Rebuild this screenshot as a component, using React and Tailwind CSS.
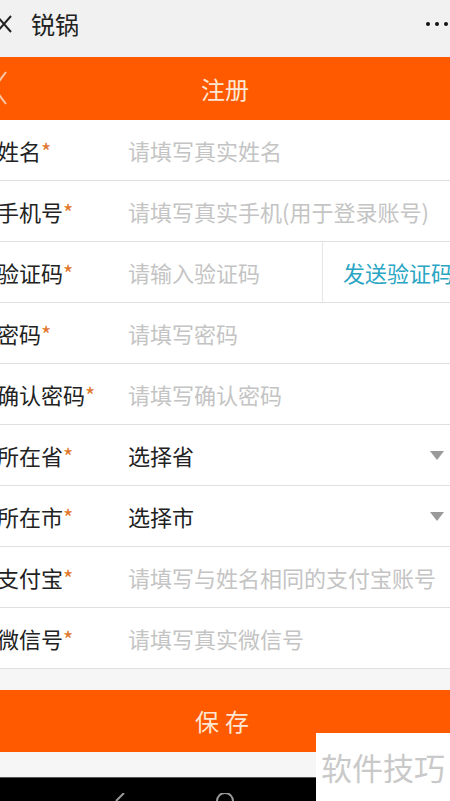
import React from 'react';

const fields = [
  { label: '姓名', placeholder: '请填写真实姓名' },
  { label: '手机号', placeholder: '请填写真实手机(用于登录账号)' },
  { label: '验证码', placeholder: '请输入验证码', code: true },
  { label: '密码', placeholder: '请填写密码' },
  { label: '确认密码', placeholder: '请填写确认密码' },
  { label: '所在省', value: '选择省', select: true },
  { label: '所在市', value: '选择市', select: true },
  { label: '支付宝', placeholder: '请填写与姓名相同的支付宝账号' },
  { label: '微信号', placeholder: '请填写真实微信号' },
];

function Row({ field }) {
  return (
    <div className="flex items-center h-[61px] border-b border-[#e0e0e0] bg-white">
      <div className="w-[131px] shrink-0 -ml-[3px] text-[22px] text-[#222] whitespace-nowrap">
        {field.label}
        <span className="text-[#e0762a]">*</span>
      </div>
      {field.select ? (
        <div className="flex-1 flex items-center justify-between pr-[6px] text-[22px] text-[#222]">
          <span>{field.value}</span>
          <svg width="14" height="9" viewBox="0 0 14 9">
            <path d="M0 0h14L7 9z" fill="#9a9a9a" />
          </svg>
        </div>
      ) : (
        <div className="flex-1 text-[22px] text-[#c4c4c4] whitespace-nowrap overflow-hidden">{field.placeholder}</div>
      )}
      {field.code && (
        <div className="h-full flex items-center border-l border-[#e6e6e6] pl-[20px] w-[128px] shrink-0 text-[22px] text-[#2aa6c4] whitespace-nowrap overflow-hidden">
          发送验证码
        </div>
      )}
    </div>
  );
}

export default function App() {
  return (
    <div
      className="relative w-[450px] h-[801px] overflow-hidden bg-[#f6f6f6]"
      style={{ fontFamily: '"Noto Sans CJK SC", "Noto Sans", sans-serif' }}
    >
      {/* WeChat top bar */}
      <div className="h-[57px] bg-[#f1f1f1] flex items-center justify-between pb-[10px]">
        <div className="flex items-center">
          <svg width="16" height="18" viewBox="0 0 16 18" className="-ml-[4px]">
            <path d="M1 1l14 16M15 1L1 17" stroke="#222" strokeWidth="2" />
          </svg>
          <span className="ml-[19px] text-[24px] text-[#222]">锐锅</span>
        </div>
        <div className="flex gap-[5px] pr-[2px]">
          <span className="w-[4px] h-[4px] rounded-full bg-[#111]"></span>
          <span className="w-[4px] h-[4px] rounded-full bg-[#111]"></span>
          <span className="w-[4px] h-[4px] rounded-full bg-[#111]"></span>
        </div>
      </div>

      {/* orange header */}
      <div className="relative h-[63px] bg-[#ff5a00] flex items-center justify-center">
        <svg width="16" height="36" viewBox="0 0 16 36" className="absolute left-[-8px] top-[13px]">
          <path d="M14 2L2 18l12 16" stroke="#f7c7a5" strokeWidth="2" fill="none" />
        </svg>
        <span className="text-[24px] text-[#fde7d4]">注册</span>
      </div>

      {/* form */}
      <div>
        {fields.map((f) => (
          <Row key={f.label} field={f} />
        ))}
      </div>

      <div className="h-[21px]"></div>

      <div className="h-[62px] bg-[#ff5a00] flex items-center justify-center text-[24px] text-[#fde7d4] tracking-[6px]">
        保存
      </div>

      <div className="h-[26px] border-b border-[#555]"></div>

      {/* system nav bar */}
      <div className="relative h-[23px] bg-black">
        <svg width="12" height="8" viewBox="0 0 12 8" className="absolute left-[114px] top-[15px]">
          <path d="M10 0L2 8" stroke="#9a9a9a" strokeWidth="2" />
        </svg>
        <svg width="20" height="8" viewBox="0 0 20 8" className="absolute left-[215px] top-[15px]">
          <path d="M2 8a8 8 0 0 1 16 0" stroke="#9a9a9a" strokeWidth="2" fill="none" />
        </svg>
      </div>

      {/* watermark */}
      <div className="absolute left-[316px] top-[733px] w-[134px] h-[68px] bg-white flex items-center justify-center text-[31px] text-[#c9c9c9]">
        软件技巧
      </div>
    </div>
  );
}
